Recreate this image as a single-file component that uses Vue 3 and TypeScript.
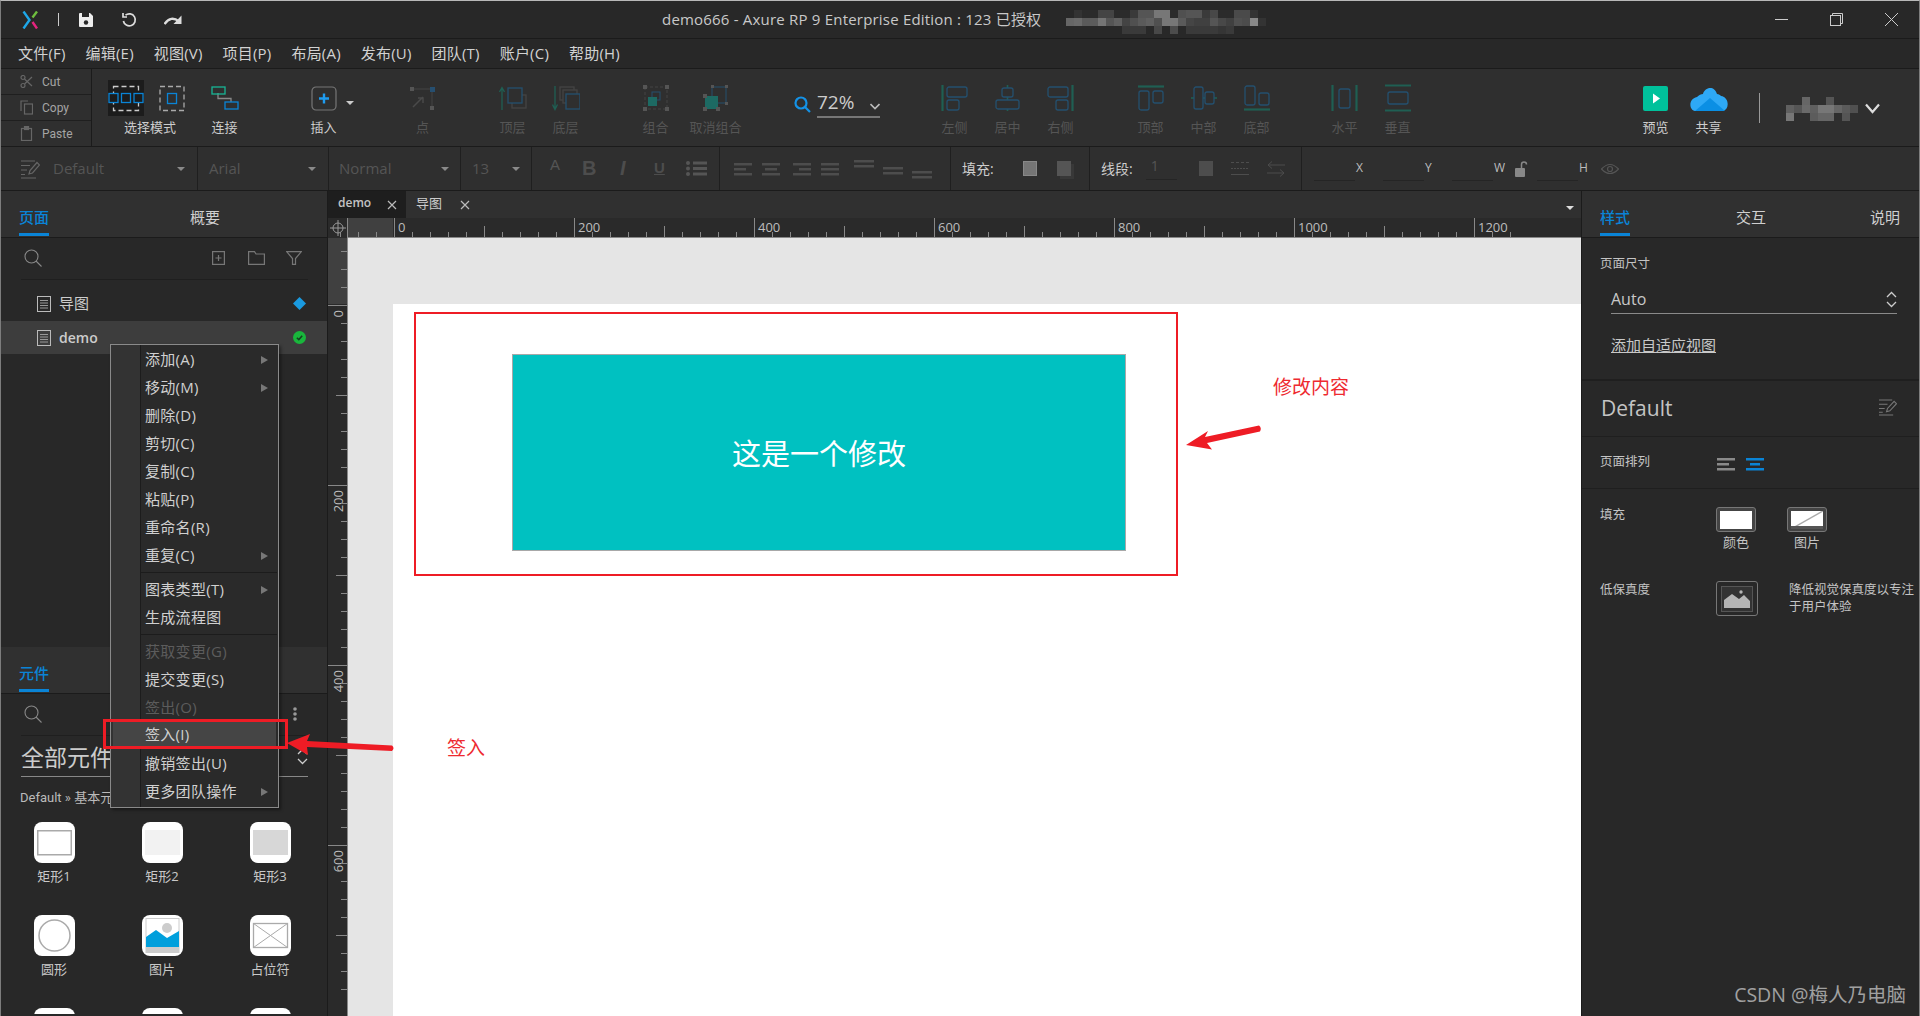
<script setup lang="ts">
const menus = ['文件(F)', '编辑(E)', '视图(V)', '项目(P)', '布局(A)', '发布(U)', '团队(T)', '账户(C)', '帮助(H)']

type MenuItem = { text: string; sub?: boolean; off?: boolean; hot?: boolean; sep?: boolean }

const contextMenu: MenuItem[] = [
  { text: '添加(A)', sub: true },
  { text: '移动(M)', sub: true },
  { text: '删除(D)' },
  { text: '剪切(C)' },
  { text: '复制(C)' },
  { text: '粘贴(P)' },
  { text: '重命名(R)' },
  { text: '重复(C)', sub: true },
  { text: '', sep: true },
  { text: '图表类型(T)', sub: true },
  { text: '生成流程图' },
  { text: '', sep: true },
  { text: '获取变更(G)', off: true },
  { text: '提交变更(S)' },
  { text: '签出(O)', off: true },
  { text: '签入(I)', hot: true },
  { text: '撤销签出(U)' },
  { text: '更多团队操作', sub: true }
]

// blurred-out areas of the screenshot, one grey per cell
const titleBlur = [
  '28 33 2b 2b 44 44 2b 2b 3a 55 55 77 77 2b 50 55 55 3a 48 2b 2b 4a 4a 33 28',
  '66 6a 5a 5c 75 55 60 44 50 5a 60 50 77 77 5a 45 40 40 55 48 40 50 4c 88 33',
  '28 28 28 28 28 28 28 3a 3a 3a 28 48 28 4c 28 3a 3a 3a 3a 35 3a 28 28 28 28'
].flatMap((r) => r.split(' '))

const userBlur = [
  '2f 2f 66 2f 2f 55 2f 2f 2f',
  '60 55 6a 60 77 77 66 5a 50',
  '77 2f 2f 5c 66 66 2f 55 2f'
].flatMap((r) => r.split(' '))

const topTicks = Array.from({ length: 66 }, (_, i) => {
  const k = i - 3
  return { x: 66 + 18 * k, h: k % 10 === 0 ? 19 : k % 5 === 0 ? 11 : 5, label: k >= 0 && k % 10 === 0 ? String(k * 20) : '' }
})

const leftTicks = Array.from({ length: 42 }, (_, i) => {
  const k = i - 3
  return { y: 67 + 18 * k, w: k % 10 === 0 ? 19 : k % 5 === 0 ? 11 : 6, label: k >= 0 && k % 10 === 0 ? String(k * 20) : '' }
})
</script>

<template>
  <div class="app">
    <header class="titlebar">
      <svg class="logo" width="16" height="18" viewBox="0 0 16 18" fill="none" stroke-width="2.4">
        <path d="M1.5 0.5 L7.5 9 L1.5 17.5" stroke="#1ea7e8" />
        <path d="M15 0.5 L10.5 6.5" stroke="#6fbf3f" />
        <path d="M10.5 11 L15 17.5" stroke="#e5247f" />
      </svg>
      <i class="title-sep"></i>
      <svg class="qa first" width="16" height="16" viewBox="0 0 16 16">
        <path d="M2 1 H12 L15 4 V14 Q15 15 14 15 H2 Q1 15 1 14 V2 Q1 1 2 1 Z" fill="#eee" />
        <rect x="4" y="1" width="7" height="4" fill="#282828" />
        <circle cx="8" cy="10.5" r="2.2" fill="#282828" />
      </svg>
      <svg class="qa" width="16" height="16" viewBox="0 0 16 16" fill="none" stroke="#ddd" stroke-width="1.7">
        <path d="M4.5 3.2 A6 6 0 1 1 2.4 9" />
        <path d="M2 1 V5 H6" />
      </svg>
      <svg class="qa" width="18" height="16" viewBox="0 0 18 16" fill="none" stroke="#ddd" stroke-width="2.4">
        <path d="M0.500 12 Q7 3 15 9.500" />
        <path d="M17.500 3.500 V12 H9.500 Z" fill="#ddd" stroke="none" />
      </svg>
      <div class="title">demo666 - Axure RP 9 Enterprise Edition : 123 已授权</div>
      <div class="blur title-blur">
        <i v-for="(g, i) in titleBlur" :key="i" :style="{ background: `#${g}${g}${g}` }"></i>
      </div>
      <div class="win">
        <svg width="13" height="13" viewBox="0 0 13 13" stroke="#ccc" fill="none"><path d="M0 6.500 H13" /></svg>
        <svg width="13" height="13" viewBox="0 0 13 13" stroke="#ccc" fill="none">
          <rect x="0.500" y="2.500" width="10" height="10" />
          <path d="M2.500 2.500 V0.500 H12.500 V10.500 H10.500" />
        </svg>
        <svg width="13" height="13" viewBox="0 0 13 13" stroke="#ccc" fill="none"><path d="M0 0 L13 13 M13 0 L0 13" /></svg>
      </div>
    </header>

    <nav class="menubar">
      <span v-for="m in menus" :key="m">{{ m }}</span>
    </nav>

    <section class="toolbar">
      <div class="clipboard">
        <div>
          <svg width="13" height="13" viewBox="0 0 13 13" fill="none" stroke="#666" stroke-width="1.200">
            <circle cx="3" cy="10.500" r="2" /><circle cx="3" cy="2.500" r="2" /><path d="M4.500 4 L12 11 M4.500 9 L12 2" />
          </svg>
          <span>Cut</span>
        </div>
        <div>
          <svg width="13" height="15" viewBox="0 0 13 15" fill="none" stroke="#666" stroke-width="1.200">
            <rect x="4.500" y="4" width="8" height="10" /><path d="M1 11 V1 H8" />
          </svg>
          <span>Copy</span>
        </div>
        <div>
          <svg width="13" height="15" viewBox="0 0 13 15" fill="none" stroke="#666" stroke-width="1.200">
            <rect x="1.500" y="2.500" width="10" height="12" /><rect x="4.500" y="0.500" width="4" height="3" fill="#666" />
          </svg>
          <span>Paste</span>
        </div>
      </div>

      <div class="tool sel">
        <div class="sel-icons">
          <svg class="sel-on" width="36" height="36" viewBox="0 0 36 36" fill="none">
            <rect x="5.500" y="6.500" width="25" height="24" stroke="#ccc" stroke-dasharray="5 3" stroke-width="1.300" />
            <g stroke="#0a84d6" stroke-width="1.300" fill="#1c1c1c">
              <rect x="1" y="13.500" width="9" height="9" /><rect x="13.500" y="13.500" width="9" height="9" /><rect x="26" y="13.500" width="9" height="9" />
            </g>
          </svg>
          <svg width="26" height="36" viewBox="0 0 26 36" fill="none">
            <rect x="1" y="6.500" width="24" height="24" stroke="#aaa" stroke-dasharray="5 3" stroke-width="1.300" />
            <rect x="8.500" y="13.500" width="9" height="10" stroke="#0a84d6" stroke-width="1.300" />
          </svg>
        </div>
        <span>选择模式</span>
      </div>

      <div class="tool">
        <div class="tool-icon">
          <svg width="28" height="24" viewBox="0 0 28 24" fill="none" stroke-width="1.300">
            <path d="M7 7 V12.500 H20 V16" stroke="#888" />
            <rect x="1" y="1" width="13" height="7" stroke="#18b596" />
            <rect x="14" y="16" width="13" height="7" stroke="#0a84d6" />
          </svg>
        </div>
        <span>连接</span>
      </div>

      <div class="tool insert">
        <div class="tool-icon">
          <svg width="26" height="25" viewBox="0 0 26 25" fill="none">
            <rect x="1" y="1" width="24" height="23" rx="4" stroke="#777" stroke-width="1.200" />
            <path d="M13 7.500 V17.500 M8 12.500 H18" stroke="#1e9cf0" stroke-width="2.400" />
          </svg>
          <i class="caret big"></i>
        </div>
        <span>插入</span>
      </div>

      <div class="tool off pt">
        <div class="tool-icon">
          <svg width="28" height="25" viewBox="0 0 28 25" fill="none">
            <path d="M4 3 H23 V21" stroke="#444" />
            <path d="M4 21 L14 11 M9 12 H14 V17" stroke="#4a4a4a" stroke-width="1.500" />
            <rect x="1" y="1" width="4" height="4" fill="#555" />
            <rect x="21" y="1" width="5" height="5" fill="#264f70" />
            <rect x="21" y="20" width="4" height="4" fill="#555" />
          </svg>
        </div>
        <span>点</span>
      </div>

      <div class="tool off gap37">
        <div class="tool-icon">
          <svg width="28" height="25" viewBox="0 0 28 25" fill="none" stroke-width="1.300">
            <path d="M3 24 V2 M0.500 6 L3 1.500 L5.500 6" stroke="#1f5f53" />
            <rect x="13" y="9" width="14" height="13" stroke="#444" />
            <rect x="9" y="2" width="14" height="15" stroke="#24506f" fill="#2f2f2f" />
          </svg>
        </div>
        <span>顶层</span>
      </div>
      <div class="tool off">
        <div class="tool-icon">
          <svg width="28" height="25" viewBox="0 0 28 25" fill="none" stroke-width="1.300">
            <path d="M3 0 V23 M0.500 18.500 L3 23.500 L5.500 18.500" stroke="#1f5f53" />
            <rect x="8" y="1" width="14" height="13" stroke="#444" />
            <rect x="11" y="4" width="14" height="13" stroke="#444" fill="#2f2f2f" />
            <rect x="14" y="8" width="14" height="15" stroke="#24506f" fill="#2f2f2f" />
          </svg>
        </div>
        <span>底层</span>
      </div>

      <div class="tool off gap37">
        <div class="tool-icon">
          <svg width="26" height="26" viewBox="0 0 26 26" fill="none">
            <rect x="2" y="2" width="22" height="22" stroke="#444" stroke-dasharray="3 2" />
            <rect x="9" y="7" width="8" height="8" stroke="#24506f" />
            <rect x="5" y="12" width="9" height="9" fill="#1d6a63" />
            <g fill="#555"><rect x="0" y="0" width="4" height="4" /><rect x="22" y="0" width="4" height="4" /><rect x="0" y="22" width="4" height="4" /><rect x="22" y="22" width="4" height="4" /></g>
          </svg>
        </div>
        <span>组合</span>
      </div>
      <div class="tool off gap7">
        <div class="tool-icon">
          <svg width="26" height="26" viewBox="0 0 26 26" fill="none">
            <rect x="9" y="2" width="14" height="16" stroke="#24506f" />
            <rect x="2" y="11" width="13" height="13" fill="#1d6a63" />
            <g fill="#555"><rect x="8" y="0" width="3" height="3" /><rect x="22" y="0" width="3" height="3" /><rect x="22" y="17" width="3" height="3" /><rect x="0" y="9" width="4" height="4" /><rect x="13" y="22" width="4" height="4" /><rect x="0" y="22" width="4" height="4" /></g>
          </svg>
        </div>
        <span>取消组合</span>
      </div>

      <div class="zoom">
        <svg width="17" height="17" viewBox="0 0 17 17" fill="none" stroke="#1492e6" stroke-width="2.200">
          <circle cx="7" cy="7" r="5.500" /><path d="M11 11 L16 16" />
        </svg>
        <div class="zoom-val">
          <span>72%</span>
          <svg width="10" height="7" viewBox="0 0 10 7" fill="none" stroke="#bbb" stroke-width="1.600"><path d="M0.500 1 L5 5.500 L9.500 1" /></svg>
        </div>
      </div>

      <div class="tool off gap48">
        <div class="tool-icon">
          <svg width="27" height="26" viewBox="0 0 27 26" fill="none" stroke="#24506f" stroke-width="1.300">
            <path d="M1.500 0 V26" stroke="#1f5f53" stroke-width="2.200" />
            <rect x="6" y="2" width="20" height="10" rx="2" /><rect x="6" y="15" width="12" height="10" rx="2" />
          </svg>
        </div>
        <span>左侧</span>
      </div>
      <div class="tool off">
        <div class="tool-icon">
          <svg width="27" height="26" viewBox="0 0 27 26" fill="none" stroke="#24506f" stroke-width="1.300">
            <path d="M13.500 0 V26" stroke="#1f5f53" stroke-width="1.600" />
            <rect x="8" y="3" width="11" height="9" rx="2" fill="#2f2f2f" /><rect x="2" y="15" width="23" height="9" rx="2" fill="#2f2f2f" />
          </svg>
        </div>
        <span>居中</span>
      </div>
      <div class="tool off">
        <div class="tool-icon">
          <svg width="27" height="26" viewBox="0 0 27 26" fill="none" stroke="#24506f" stroke-width="1.300">
            <path d="M25.500 0 V26" stroke="#1f5f53" stroke-width="2.200" />
            <rect x="1" y="2" width="20" height="10" rx="2" /><rect x="9" y="15" width="12" height="10" rx="2" />
          </svg>
        </div>
        <span>右侧</span>
      </div>

      <div class="tool off gap37">
        <div class="tool-icon">
          <svg width="26" height="26" viewBox="0 0 26 26" fill="none" stroke="#24506f" stroke-width="1.300">
            <path d="M0 1.500 H26" stroke="#1f5f53" stroke-width="2.200" />
            <rect x="1" y="6" width="10" height="19" rx="2" /><rect x="15" y="6" width="10" height="12" rx="2" />
          </svg>
        </div>
        <span>顶部</span>
      </div>
      <div class="tool off">
        <div class="tool-icon">
          <svg width="26" height="26" viewBox="0 0 26 26" fill="none" stroke="#24506f" stroke-width="1.300">
            <path d="M0 13 H26" stroke="#1f5f53" stroke-width="1.600" />
            <rect x="3" y="2" width="9" height="22" rx="2" fill="#2f2f2f" /><rect x="14" y="7" width="9" height="12" rx="2" fill="#2f2f2f" />
          </svg>
        </div>
        <span>中部</span>
      </div>
      <div class="tool off">
        <div class="tool-icon">
          <svg width="26" height="26" viewBox="0 0 26 26" fill="none" stroke="#24506f" stroke-width="1.300">
            <path d="M0 24.500 H26" stroke="#1f5f53" stroke-width="2.200" />
            <rect x="1" y="1" width="10" height="19" rx="2" /><rect x="15" y="8" width="10" height="12" rx="2" />
          </svg>
        </div>
        <span>底部</span>
      </div>

      <div class="tool off gap35">
        <div class="tool-icon">
          <svg width="27" height="26" viewBox="0 0 27 26" fill="none" stroke="#24506f" stroke-width="1.300">
            <path d="M1.500 0 V26 M25.500 0 V26" stroke="#1f5f53" stroke-width="2.200" />
            <rect x="8" y="4" width="11" height="19" rx="2" />
          </svg>
        </div>
        <span>水平</span>
      </div>
      <div class="tool off">
        <div class="tool-icon">
          <svg width="26" height="28" viewBox="0 0 26 28" fill="none" stroke="#24506f" stroke-width="1.300">
            <path d="M0 1.500 H26 M0 26.500 H26" stroke="#1f5f53" stroke-width="2.200" />
            <rect x="3" y="8" width="20" height="12" rx="2" />
          </svg>
        </div>
        <span>垂直</span>
      </div>

      <div class="tool preview">
        <div class="tool-icon">
          <svg width="25" height="25" viewBox="0 0 25 25">
            <rect width="25" height="25" rx="2" fill="#00c19b" />
            <path d="M10 7.500 L17 12.500 L10 17.500 Z" fill="#fff" />
          </svg>
        </div>
        <span>预览</span>
      </div>
      <div class="tool">
        <div class="tool-icon">
          <svg width="38" height="25" viewBox="0 0 38 25">
            <path d="M5 25 C-1 24 -2 13 7 11 C9 9 11 8 13 8 C14 2 24 -2 27 8 C29 8 30 9 31 10 C39 11 40 23 33 25 Z" fill="#2ea9f6" />
            <path d="M5 25 L20 12 L35 25 Z" fill="#0a8fe4" />
          </svg>
        </div>
        <span>共享</span>
      </div>
      <i class="tool-sep"></i>
      <div class="blur user-blur">
        <i v-for="(g, i) in userBlur" :key="i" :style="{ background: `#${g}${g}${g}` }"></i>
      </div>
      <svg class="user-chev" width="15" height="11" viewBox="0 0 15 11" fill="none" stroke="#ddd" stroke-width="2.200"><path d="M1 1.500 L7.500 9 L14 1.500" /></svg>
    </section>

    <section class="formatbar">
      <div class="fmt f1">
        <svg width="20" height="20" viewBox="0 0 20 20" fill="none" stroke="#666" stroke-width="1.200">
          <path d="M1 2 H15 M1 6.500 H10 M1 11 H7 M1 15.500 H5 M1 19 H16" />
          <path d="M9 15 L10 11.500 L17 3.500 L19.500 6 L12.500 14 Z" />
        </svg>
        <span class="style-name">Default</span><i class="caret"></i>
      </div>
      <div class="fmt f2"><span>Arial</span><i class="caret"></i></div>
      <div class="fmt f3"><span>Normal</span><i class="caret"></i></div>
      <div class="fmt f4"><span>13</span><i class="caret"></i></div>
      <div class="fmt f5">
        <span class="a">A</span><b>B</b><b class="it">I</b><span class="u">U</span>
        <svg width="22" height="15" viewBox="0 0 22 15" fill="#555">
          <circle cx="2" cy="2" r="2" /><circle cx="2" cy="7.500" r="2" /><circle cx="2" cy="13" r="2" />
          <rect x="7" y="0.500" width="14" height="3" /><rect x="7" y="6" width="14" height="3" /><rect x="7" y="11.500" width="14" height="3" />
        </svg>
      </div>
      <div class="fmt f6">
        <svg width="230" height="43" viewBox="0 0 230 43" fill="#4d4d4d">
          <g transform="translate(14 16)"><rect width="18" height="2.500" /><rect y="5" width="12" height="2.500" /><rect y="10" width="18" height="2.500" /></g>
          <g transform="translate(42 16)"><rect width="18" height="2.500" /><rect x="3" y="5" width="12" height="2.500" /><rect y="10" width="18" height="2.500" /></g>
          <g transform="translate(73 16)"><rect width="18" height="2.500" /><rect x="6" y="5" width="12" height="2.500" /><rect y="10" width="18" height="2.500" /></g>
          <g transform="translate(101 16)"><rect width="18" height="2.500" /><rect y="5" width="18" height="2.500" /><rect y="10" width="18" height="2.500" /></g>
          <g transform="translate(134 13)"><rect width="20" height="2.500" /><rect y="5" width="20" height="2.500" /></g>
          <g transform="translate(163 20)"><rect width="20" height="2.500" /><rect y="5" width="20" height="2.500" /></g>
          <g transform="translate(192 24)"><rect width="20" height="2.500" /><rect y="5" width="20" height="2.500" /></g>
        </svg>
      </div>
      <div class="fmt f7">
        <span class="fmt-label">填充:</span>
        <i class="swatch light"></i>
        <i class="swatch shadow"></i>
      </div>
      <div class="fmt f8">
        <span class="fmt-label">线段:</span>
        <span class="stroke-w">1</span>
        <i class="swatch dark"></i>
        <svg class="dash" width="18" height="15" viewBox="0 0 18 15" fill="none" stroke="#4d4d4d"><path d="M0 1.500 H18" stroke-dasharray="3 2" /><path d="M0 7.500 H18" stroke-dasharray="2 1" /><path d="M0 13.500 H18" /></svg>
        <svg class="ends" width="18" height="16" viewBox="0 0 18 16" fill="none" stroke="#4d4d4d"><path d="M18 4 H1 M5 0.500 L1 4 L5 7.500 M0 12 H17 M13 8.500 L17 12 L13 15.500" /></svg>
      </div>
      <div class="fmt f9">
        <i class="inp"></i><span>X</span>
        <i class="inp"></i><span>Y</span>
        <i class="inp"></i><span>W</span>
        <svg class="lock" width="13" height="16" viewBox="0 0 13 16" fill="none">
          <rect x="0" y="7" width="10" height="9" rx="1" fill="#888" />
          <path d="M6.500 7 V3.500 Q6.500 1 9 1 Q11.500 1 11.500 3.500" stroke="#888" stroke-width="1.500" />
        </svg>
        <i class="inp"></i><span>H</span>
        <svg class="eye" width="18" height="14" viewBox="0 0 18 14" fill="none" stroke="#555" stroke-width="1.200"><path d="M0.500 7 Q9 -2 17.500 7 Q9 16 0.500 7 Z" /><circle cx="9" cy="7" r="2.500" /></svg>
      </div>
    </section>

    <main class="workspace">
      <aside class="left">
        <div class="pages">
          <div class="tabs">
            <span class="tab on">页面</span>
            <span class="tab outline">概要</span>
          </div>
          <div class="searchrow">
            <svg width="18" height="18" viewBox="0 0 18 18" fill="none" stroke="#888" stroke-width="1.100"><circle cx="7.500" cy="7.500" r="6.500" /><path d="M12 12 L17.500 17.500" /></svg>
            <svg class="add" width="13" height="14" viewBox="0 0 13 14" fill="none" stroke="#777" stroke-width="1.200"><rect x="0.600" y="0.600" width="11.800" height="12.800" /><path d="M6.500 4 V10 M3.500 7 H9.500" /></svg>
            <svg class="folder" width="17" height="14" viewBox="0 0 17 14" fill="none" stroke="#777" stroke-width="1.200"><path d="M0.600 13.400 V0.600 H6.500 L8 3 H16.400 V13.400 Z" /></svg>
            <svg class="filter" width="16" height="14" viewBox="0 0 16 14" fill="none" stroke="#777" stroke-width="1.200"><path d="M0.600 0.600 H15.400 L9.500 7.500 V13.400 H6.500 V7.500 Z" /></svg>
          </div>
          <div class="pagelist">
            <div class="pagerow">
              <svg width="14" height="16" viewBox="0 0 14 16" fill="none" stroke="#bbb"><rect x="0.500" y="0.500" width="13" height="15" /><path d="M3 4.500 H11 M3 7 H11 M3 9.500 H11 M3 12 H11" stroke="#999" /></svg>
              <span class="cjk-name">导图</span>
              <svg class="mark" width="13" height="13" viewBox="0 0 13 13"><path d="M6.500 0 L13 6.500 L6.500 13 L0 6.500 Z" fill="#1a9ae0" /></svg>
            </div>
            <div class="pagerow cur">
              <svg width="14" height="16" viewBox="0 0 14 16" fill="none" stroke="#bbb"><rect x="0.500" y="0.500" width="13" height="15" /><path d="M3 4.500 H11 M3 7 H11 M3 9.500 H11 M3 12 H11" stroke="#999" /></svg>
              <span>demo</span>
              <svg class="mark" width="13" height="13" viewBox="0 0 13 13" fill="none"><circle cx="6.500" cy="6.500" r="6.500" fill="#19b63c" /><path d="M3.800 6.800 L5.800 8.600 L9.200 4.800" stroke="#14401f" stroke-width="1.500" /></svg>
            </div>
          </div>
        </div>

        <div class="palette">
          <div class="tabs">
            <span class="tab on">元件</span>
          </div>
          <div class="searchrow">
            <svg width="18" height="18" viewBox="0 0 18 18" fill="none" stroke="#888" stroke-width="1.100"><circle cx="7.500" cy="7.500" r="6.500" /><path d="M12 12 L17.500 17.500" /></svg>
            <svg class="dots" width="4" height="14" viewBox="0 0 4 14" fill="#999"><circle cx="2" cy="2" r="1.800" /><circle cx="2" cy="7" r="1.800" /><circle cx="2" cy="12" r="1.800" /></svg>
          </div>
          <div class="libsel">
            <span>全部元件</span>
            <svg width="11" height="17" viewBox="0 0 11 17" fill="none" stroke="#ccc" stroke-width="1.300"><path d="M1 6 L5.500 1.500 L10 6 M1 11 L5.500 15.500 L10 11" /></svg>
          </div>
          <div class="crumb">Default » 基本元件</div>
          <div class="tiles">
            <div class="tile">
              <svg width="41" height="41" viewBox="0 0 41 41"><rect width="41" height="41" rx="8" fill="#fff" /><rect x="3.750" y="8.750" width="33.500" height="24" fill="#fff" stroke="#aaa" stroke-width="1.500" /></svg>
              <span>矩形1</span>
            </div>
            <div class="tile">
              <svg width="41" height="41" viewBox="0 0 41 41"><rect width="41" height="41" rx="8" fill="#fff" /><rect x="3" y="8" width="35" height="25" fill="#f2f2f2" /></svg>
              <span>矩形2</span>
            </div>
            <div class="tile">
              <svg width="41" height="41" viewBox="0 0 41 41"><rect width="41" height="41" rx="8" fill="#fff" /><rect x="3" y="8" width="35" height="25" fill="#d7d7d7" /></svg>
              <span>矩形3</span>
            </div>
            <div class="tile">
              <svg width="41" height="41" viewBox="0 0 41 41"><rect width="41" height="41" rx="8" fill="#fff" /><circle cx="20.500" cy="20.500" r="15.500" fill="#fff" stroke="#aaa" stroke-width="1.500" /></svg>
              <span>圆形</span>
            </div>
            <div class="tile">
              <svg width="41" height="41" viewBox="0 0 41 41">
                <rect width="41" height="41" rx="8" fill="#fff" />
                <rect x="4" y="3.500" width="33" height="34" fill="#fff" stroke="#ccc" />
                <circle cx="25" cy="13" r="5" fill="#ccc" />
                <path d="M4 22 L14 15 L25 23 L37 16 V32 H4 Z" fill="#009fdc" />
                <rect x="4" y="32" width="33" height="5" fill="#ccc" />
              </svg>
              <span>图片</span>
            </div>
            <div class="tile">
              <svg width="41" height="41" viewBox="0 0 41 41" fill="none" stroke="#aaa">
                <rect width="41" height="41" rx="8" fill="#fff" stroke="none" />
                <rect x="3.500" y="8.500" width="34" height="24" stroke-width="1.300" />
                <path d="M3.500 8.500 L37.500 32.500 M37.500 8.500 L3.500 32.500" />
              </svg>
              <span>占位符</span>
            </div>
            <div class="tile"><svg width="41" height="41" viewBox="0 0 41 41"><rect width="41" height="41" rx="8" fill="#fff" /></svg></div>
            <div class="tile"><svg width="41" height="41" viewBox="0 0 41 41"><rect width="41" height="41" rx="8" fill="#fff" /></svg></div>
            <div class="tile"><svg width="41" height="41" viewBox="0 0 41 41"><rect width="41" height="41" rx="8" fill="#fff" /></svg></div>
          </div>
        </div>
      </aside>

      <div class="center">
        <div class="doctabs">
          <div class="doctab cur"><span>demo</span><svg width="10" height="10" viewBox="0 0 10 10" stroke="#bbb" stroke-width="1.200"><path d="M1 1 L9 9 M9 1 L1 9" /></svg></div>
          <div class="doctab"><span>导图</span><svg width="10" height="10" viewBox="0 0 10 10" stroke="#bbb" stroke-width="1.200"><path d="M1 1 L9 9 M9 1 L1 9" /></svg></div>
          <i class="caret tabs-caret"></i>
        </div>
        <svg class="ruler-top" width="1253" height="20" viewBox="0 0 1253 20">
          <rect width="1253" height="20" fill="#2a2a2a" />
          <rect x="20" width="45" height="19" fill="#404040" />
          <g fill="none" stroke="#999">
            <circle cx="10" cy="10" r="5" /><path d="M10 2 V18 M2 10 H18" />
          </g>
          <path d="M19.500 0 V20 M20 19.500 H1253" stroke="#888" />
          <g v-for="t in topTicks" :key="t.x">
            <path :d="`M${t.x + 0.5} ${19 - t.h} V19`" stroke="#888" />
            <text v-if="t.label" :x="t.x + 4" y="14" class="ruler-text">{{ t.label }}</text>
          </g>
        </svg>
        <div class="view">
          <svg class="ruler-left" width="20" height="778" viewBox="0 0 20 778">
            <rect width="20" height="778" fill="#2a2a2a" />
            <rect width="19" height="66" fill="#404040" />
            <path d="M19.500 0 V778" stroke="#888" />
            <g v-for="t in leftTicks" :key="t.y">
              <path :d="`M${19 - t.w} ${t.y + 0.5} H19`" stroke="#888" />
              <text v-if="t.label" x="15" :y="t.y + 5" text-anchor="end" :transform="`rotate(-90 15 ${t.y + 5})`" class="ruler-text">{{ t.label }}</text>
            </g>
          </svg>
          <div class="canvas">
            <div class="sheet">
              <div class="redbox"></div>
              <div class="teal">这是一个修改</div>
              <div class="note n1">修改内容</div>
              <div class="note n2">签入</div>
            </div>
          </div>
        </div>
      </div>

      <aside class="right">
        <div class="tabs rtabs">
          <span class="tab on">样式</span>
          <span class="tab outline">交互</span>
          <span class="tab notes">说明</span>
        </div>
        <div class="r-size">
          <div class="r-label">页面尺寸</div>
          <div class="auto">
            <span>Auto</span>
            <svg width="11" height="17" viewBox="0 0 11 17" fill="none" stroke="#ccc" stroke-width="1.300"><path d="M1 6 L5.500 1.500 L10 6 M1 11 L5.500 15.500 L10 11" /></svg>
          </div>
          <div class="adaptive">添加自适应视图</div>
        </div>
        <div class="r-style">
          <span>Default</span>
          <svg width="19" height="17" viewBox="0 0 20 18" fill="none" stroke="#777" stroke-width="1.200">
            <path d="M1 1 H15 M1 5.500 H10 M1 10 H7 M1 14 H5 M1 17 H16" />
            <path d="M9 13.500 L10 10 L17 2.500 L19.500 5 L12.500 12.500 Z" />
          </svg>
        </div>
        <div class="r-align">
          <div class="r-label">页面排列</div>
          <div class="align-icons">
            <svg width="18" height="13" viewBox="0 0 18 13" fill="#8a8a8a"><rect width="18" height="2.500" /><rect y="5" width="12" height="2.500" /><rect y="10" width="18" height="2.500" /></svg>
            <svg width="18" height="13" viewBox="0 0 18 13" fill="#0a84d6"><rect width="18" height="2.500" /><rect x="4" y="5" width="10" height="2.500" /><rect y="10" width="18" height="2.500" /></svg>
          </div>
        </div>
        <div class="r-fill">
          <div class="r-label">填充</div>
          <div class="fill-opts">
            <div class="fill-opt">
              <div class="fill-box"><i class="fill-white"></i></div>
              <span>颜色</span>
            </div>
            <div class="fill-opt">
              <div class="fill-box">
                <svg width="32" height="18" viewBox="0 0 32 18"><rect width="32" height="18" fill="#fff" /><path d="M0 18 L32 0" stroke="#aaa" stroke-width="1.500" /><rect y="15" width="32" height="3" fill="#555" /></svg>
              </div>
              <span>图片</span>
            </div>
          </div>
          <div class="r-label lofi">低保真度</div>
          <div class="lofi-row">
            <div class="lofi-box">
              <svg width="32" height="26" viewBox="0 0 32 26">
                <rect x="0.500" y="0.500" width="31" height="25" fill="#333" stroke="#555" />
                <path d="M3 22 V14 L11 8 L18 13 L23 9 L29 15 V22 Z" fill="#b5b5b5" />
                <circle cx="20" cy="6" r="1.700" fill="#b5b5b5" />
              </svg>
            </div>
            <div class="lofi-text">降低视觉保真度以专注于用户体验</div>
          </div>
        </div>
      </aside>
    </main>

    <div class="ctx">
      <template v-for="(it, i) in contextMenu" :key="i">
        <div v-if="it.sep" class="ctx-sep"></div>
        <div v-else class="ctx-item" :class="{ off: it.off, hot: it.hot }">
          <span>{{ it.text }}</span>
          <i v-if="it.sub" class="ctx-arrow"></i>
        </div>
      </template>
    </div>

    <div class="callout"></div>
    <svg class="arrows" width="1920" height="1016" viewBox="0 0 1920 1016">
      <g fill="#ee1c25">
        <path d="M1259 425.500 L1205 437 L1208 431 L1186 445 L1212 449.500 L1207 443 L1260 431.500 Q1262 428 1259 425.500 Z" />
        <path d="M392 745.500 L307 741 L310 734 L287 743 L308 755 L307 747 L392 751 Q395 748 392 745.500 Z" />
      </g>
    </svg>
    <div class="watermark">CSDN @梅人乃电脑</div>
  </div>
</template>

<style>
html,
body {
  margin: 0;
  background: #282828;
  overflow: hidden;
}
</style>

<style scoped>
.app {
  position: relative;
  box-sizing: border-box;
  width: 1920px;
  height: 1016px;
  overflow: hidden;
  display: flex;
  flex-direction: column;
  border: 1px solid #7d7d7d;
  border-top-color: #b8b8b8;
  border-bottom: 0;
  background: #282828;
  color: #ccc;
  font-family: "Open Sans", "Noto Sans CJK SC", sans-serif;
  font-size: 13px;
}

i {
  display: block;
  font-style: normal;
}

svg {
  display: block;
  flex: none;
}

/* title bar */
.titlebar {
  height: 37px;
  flex: none;
  display: flex;
  align-items: center;
  padding-left: 21px;
  border-bottom: 1px solid #1b1b1b;
}

.title-sep {
  width: 1px;
  height: 13px;
  margin-left: 20px;
  background: #ccc;
}

.qa {
  margin-left: 27px;
}

.qa.first {
  margin-left: 19px;
}

.title {
  width: 402px;
  margin-left: 480px;
  padding-bottom: 2px;
  font-size: 15px;
  letter-spacing: 0.2px;
  color: #c9c9c9;
  white-space: nowrap;
}

.blur {
  display: grid;
}

.title-blur {
  grid-template-columns: repeat(25, 8px);
  grid-auto-rows: 8px;
  margin-top: 5px;
  margin-left: 2px;
}

.win {
  margin-left: auto;
  padding-right: 21px;
  display: flex;
  gap: 42px;
}

/* menu */
.menubar {
  flex: none;
  display: flex;
  align-items: center;
  gap: 20px;
  padding: 0 0 3px 17px;
  box-sizing: border-box;
  height: 30px;
  font-size: 15px;
  letter-spacing: 0.2px;
  color: #d2d2d2;
  border-bottom: 1px solid #1b1b1b;
}

/* toolbar */
.toolbar {
  height: 77px;
  flex: none;
  display: flex;
  background: #2f2f2f;
  border-bottom: 1px solid #1b1b1b;
}

.clipboard {
  width: 90px;
  flex: none;
  display: flex;
  flex-direction: column;
  border-right: 1px solid #1b1b1b;
  margin-right: 10px;
  font-family: Roboto, sans-serif;
  font-size: 12px;
  color: #a5a5a5;
}

.clipboard > div {
  height: 25px;
  display: flex;
  align-items: center;
  gap: 9px;
  padding-left: 19px;
  border-bottom: 1px solid #1f1f1f;
}

.clipboard > div:last-child {
  border-bottom: 0;
}

.tool {
  width: 53px;
  flex: none;
  padding-top: 11px;
  display: flex;
  flex-direction: column;
  align-items: center;
  color: #cdcdcd;
}

.tool > span {
  margin-top: 2px;
  line-height: 18px;
  white-space: nowrap;
}

.tool.off > span {
  color: #555;
}

.tool-icon {
  position: relative;
  height: 36px;
  display: flex;
  align-items: center;
  justify-content: center;
}

.sel {
  width: 96px;
}

.sel-icons {
  height: 36px;
  width: 96px;
  display: flex;
  gap: 15px;
  padding-left: 6px;
  box-sizing: border-box;
}

.sel-on {
  background: #1c1c1c;
}

.insert {
  margin-left: 46px;
}

.pt {
  margin-left: 46px;
}

.gap37 {
  margin-left: 37px;
}

.gap7 {
  margin-left: 7px;
}

.gap48 {
  margin-left: 48px;
}

.gap35 {
  margin-left: 35px;
}

.preview {
  margin-left: 205px;
}

.caret {
  width: 0;
  height: 0;
  border-left: 4px solid transparent;
  border-right: 4px solid transparent;
  border-top: 4px solid #8a8a8a;
}

.caret.big {
  position: absolute;
  left: 35px;
  top: 21px;
  border-top-color: #ccc;
}

.zoom {
  width: 86px;
  flex: none;
  margin-left: 52px;
  padding-top: 23px;
  display: flex;
  gap: 6px;
  height: 24px;
  align-items: flex-start;
}

.zoom > svg {
  margin-top: 4px;
}

.zoom-val {
  flex: 1;
  height: 24px;
  display: flex;
  align-items: flex-start;
  justify-content: space-between;
  border-bottom: 2px solid #777;
  font-size: 19px;
  line-height: 20px;
  color: #ccc;
}

.zoom-val svg {
  margin-top: 11px;
}

.tool-sep {
  width: 1px;
  height: 30px;
  margin: 24px 0 0 24px;
  background: #999;
}

.user-blur {
  grid-template-columns: repeat(9, 8px);
  grid-auto-rows: 8px;
  margin: 28px 0 0 26px;
  height: 24px;
}

.user-chev {
  margin: 34px 0 0 7px;
}

/* format bar */
.formatbar {
  height: 43px;
  flex: none;
  display: flex;
  background: #2f2f2f;
  border-bottom: 1px solid #1b1b1b;
  color: #555;
  font-size: 15px;
}

.fmt {
  box-sizing: border-box;
  flex: none;
  display: flex;
  align-items: center;
  border-right: 1px solid #1f1f1f;
}

.fmt > .caret {
  margin-left: auto;
}

.fmt > span {
  margin-bottom: 2px;
}

.f1 {
  width: 197px;
  padding: 0 12px 0 19px;
}

.style-name {
  margin-left: 13px;
}

.f2 {
  width: 131px;
  padding: 0 12px 0 11px;
}

.f3 {
  width: 132px;
  padding: 0 11px 0 10px;
}

.f4 {
  width: 71px;
  padding: 0 11px;
}

.f5 {
  width: 188px;
  padding-left: 18px;
  font-family: "Liberation Sans", sans-serif;
}

.f5 .a {
  width: 32px;
  font-size: 15px;
  margin-top: -6px;
}

.f5 b {
  width: 38px;
  font-size: 20px;
  font-weight: 700;
  color: #4d4d4d;
}

.f5 .it {
  width: 34px;
  font-style: italic;
}

.f5 .u {
  width: 32px;
  font-size: 15px;
  font-weight: 700;
  text-decoration: underline;
  color: #4d4d4d;
}

.f6 {
  width: 231px;
}

.f7 {
  width: 139px;
  padding-left: 11px;
}

.fmt-label {
  font-size: 14px;
  color: #cdcdcd;
  white-space: nowrap;
}

.swatch {
  width: 14px;
  height: 15px;
}

.swatch.light {
  margin-left: 29px;
  background: #757575;
  border: 1px solid #888;
  box-sizing: border-box;
}

.swatch.shadow {
  margin-left: 20px;
  background: #555;
  box-shadow: 3px 3px 0 #383838;
}

.f8 {
  width: 212px;
  padding-left: 11px;
}

.stroke-w {
  width: 31px;
  margin-left: 13px;
  padding: 0 0 2px 5px;
  box-sizing: border-box;
  font-size: 14px;
  line-height: 22px;
  border-bottom: 1px solid #252525;
}

.swatch.dark {
  margin-left: 22px;
  background: #4d4d4d;
}

.dash {
  margin-left: 18px;
}

.ends {
  margin-left: 18px;
}

.f9 {
  flex: 1;
  border-right: 0;
  padding-left: 12px;
  font-size: 12px;
  color: #bdbdbd;
}

.inp {
  width: 41px;
  height: 24px;
  border-bottom: 1px solid #252525;
  box-sizing: border-box;
}

.f9 span {
  width: 28px;
  padding-left: 1px;
  box-sizing: border-box;
}

.lock {
  margin-left: -6px;
  margin-right: 9px;
}

.eye {
  margin-left: -5px;
}

/* work area */
.workspace {
  flex: 1;
  min-height: 0;
  display: flex;
}

.left {
  width: 327px;
  flex: none;
  box-sizing: border-box;
  display: flex;
  flex-direction: column;
  border-right: 1px solid #1b1b1b;
}

.tabs {
  height: 46px;
  flex: none;
  display: flex;
  padding-left: 18px;
  background: #303030;
  border-bottom: 1px solid #1b1b1b;
}

.tab {
  height: 45px;
  box-sizing: border-box;
  padding-top: 15px;
  line-height: 22px;
  font-size: 15px;
  color: #cfcfcf;
}

.tab.on {
  color: #0a84d6;
  font-weight: 500;
  border-bottom: 3px solid #0a84d6;
}

.tab.outline {
  margin-left: 141px;
}

.rtabs .tab.outline {
  margin-left: 106px;
}

.tab.notes {
  margin-left: 104px;
}

.pages {
  height: 456px;
  flex: none;
}

.searchrow {
  height: 39px;
  margin: 0 19px 0 20px;
  display: flex;
  align-items: center;
  padding: 0 0 2px 3px;
  border-bottom: 1px solid #1f1f1f;
}

.add {
  margin-left: auto;
}

.folder {
  margin-left: 23px;
}

.filter {
  margin-left: 21px;
  margin-right: 6px;
}

.dots {
  margin-left: auto;
  margin-right: 11px;
}

.pagelist {
  padding-top: 7px;
  display: flex;
  flex-direction: column;
  gap: 1px;
  font-size: 14px;
}

.pagerow {
  height: 33px;
  display: flex;
  align-items: center;
  gap: 8px;
  padding: 0 21px 0 36px;
}

.pagerow.cur {
  background: #3d3d3d;
  font-weight: 600;
}

.cjk-name {
  font-size: 15px;
  padding-bottom: 3px;
}

.mark {
  margin-left: auto;
}

.palette {
  height: 367px;
  overflow: hidden;
}

.libsel {
  height: 40px;
  margin: 0 19px 0 20px;
  display: flex;
  align-items: center;
  justify-content: space-between;
  border-bottom: 1px solid #888;
  font-size: 23px;
  color: #ccc;
}

.crumb {
  margin: 11px 0 0 19px;
  height: 20px;
  line-height: 20px;
  font-family: Roboto, "Noto Sans CJK SC", sans-serif;
  font-size: 13px;
  color: #bbb;
  white-space: nowrap;
}

.tiles {
  display: grid;
  grid-template-columns: repeat(3, 108px);
  grid-auto-rows: 93px;
  margin: 14px 0 0 -1px;
}

.tile {
  display: flex;
  flex-direction: column;
  align-items: center;
  font-size: 13px;
  color: #c8c8c8;
}

.tile span {
  margin-top: 4px;
  line-height: 18px;
}

/* centre */
.center {
  flex: 1;
  min-width: 0;
  display: flex;
  flex-direction: column;
}

.doctabs {
  height: 27px;
  flex: none;
  display: flex;
  background: #303030;
  position: relative;
}

.doctab {
  width: 78px;
  display: flex;
  align-items: center;
  justify-content: space-between;
  padding: 0 9px 0 10px;
  box-sizing: border-box;
  font-size: 13px;
}

.doctab span {
  padding-bottom: 4px;
}

.doctab.cur {
  background: #1e1e1e;
  font-size: 12px;
  font-weight: 600;
  color: #c4c4c4;
}

.doctab:not(.cur) {
  width: 74px;
  padding-left: 10px;
  padding-right: 10px;
}

.tabs-caret {
  position: absolute;
  right: 7px;
  top: 15px;
  border-top-color: #ddd;
}

.ruler-top {
  flex: none;
}

.ruler-text {
  font-family: "Open Sans", sans-serif;
  font-size: 13px;
  fill: #bdbdbd;
}

.view {
  flex: 1;
  min-height: 0;
  display: flex;
}

.ruler-left {
  flex: none;
}

.canvas {
  flex: 1;
  min-width: 0;
  background: #e5e5e5;
  padding: 66px 0 0 45px;
  overflow: hidden;
}

.sheet {
  position: relative;
  height: 100%;
  background: #fff;
}

.redbox {
  position: absolute;
  left: 21px;
  top: 8px;
  width: 764px;
  height: 264px;
  box-sizing: border-box;
  border: 2px solid #ee1c25;
}

.teal {
  position: absolute;
  left: 119px;
  top: 50px;
  width: 614px;
  height: 197px;
  box-sizing: border-box;
  border: 1px solid #a8a8a8;
  padding-bottom: 2px;
  background: #00c1c1;
  color: #fff;
  font-size: 29px;
  display: flex;
  align-items: center;
  justify-content: center;
}

.note {
  position: absolute;
  font-size: 19px;
  line-height: 28px;
  color: #ee2a30;
}

.n1 {
  left: 880px;
  top: 69px;
}

.n2 {
  left: 54px;
  top: 430px;
}

/* right panel */
.right {
  width: 338px;
  flex: none;
  box-sizing: border-box;
  border-left: 1px solid #1b1b1b;
  display: flex;
  flex-direction: column;
}

.r-label {
  font-size: 12.5px;
  line-height: 18px;
  color: #c4c4c4;
}

.r-size {
  height: 143px;
  flex: none;
  box-sizing: border-box;
  padding: 17px 22px 0 18px;
  border-bottom: 2px solid #1f1f1f;
}

.auto {
  margin: 12px 0 0 11px;
  height: 28px;
  display: flex;
  align-items: center;
  justify-content: space-between;
  border-bottom: 1px solid #8a8a8a;
  font-size: 16px;
  color: #c8c8c8;
}

.adaptive {
  margin: 20px 0 0 11px;
  font-size: 15px;
  line-height: 22px;
  color: #c8c8c8;
  text-decoration: underline;
}

.r-style {
  height: 56px;
  flex: none;
  box-sizing: border-box;
  padding: 0 22px 2px 19px;
  display: flex;
  align-items: center;
  justify-content: space-between;
  font-size: 21px;
  color: #c4c4c4;
  border-bottom: 1px solid #1f1f1f;
}

.r-align {
  height: 52px;
  flex: none;
  box-sizing: border-box;
  padding: 16px 0 0 18px;
  display: flex;
  border-bottom: 1px solid #1f1f1f;
}

.align-icons {
  display: flex;
  gap: 11px;
  margin: 5px 0 0 67px;
}

.r-fill {
  padding: 17px 0 0 18px;
  display: grid;
  grid-template-columns: 116px 1fr;
}

.fill-opts {
  display: flex;
  gap: 31px;
  height: 74px;
  margin-top: 1px;
}

.fill-opt {
  width: 40px;
  display: flex;
  flex-direction: column;
  align-items: center;
  font-size: 13px;
  color: #c4c4c4;
}

.fill-opt span {
  margin-top: 1px;
  line-height: 18px;
}

.fill-box {
  width: 40px;
  height: 25px;
  box-sizing: border-box;
  border: 1px solid #777;
  border-radius: 3px;
  background: #444;
  display: flex;
  align-items: center;
  justify-content: center;
}

.fill-white {
  width: 32px;
  height: 18px;
  background: #fff;
}

.lofi-row {
  display: flex;
}

.lofi-box {
  width: 42px;
  height: 35px;
  box-sizing: border-box;
  border: 1px solid #777;
  border-radius: 3px;
  display: flex;
  align-items: center;
  justify-content: center;
  flex: none;
}

.lofi-text {
  width: 126px;
  margin-left: 31px;
  font-size: 12.5px;
  line-height: 17px;
  color: #c4c4c4;
}

/* context menu, over the panels */
.ctx {
  position: absolute;
  left: 109px;
  top: 343px;
  width: 169px;
  box-sizing: border-box;
  padding: 1px 0;
  border: 1px solid #8a8a8a;
  background: linear-gradient(90deg, #333 0, #333 29px, #1c1c1c 29px, #1c1c1c 30px, #2a2a2a 30px);
  box-shadow: 2px 2px 3px rgba(0, 0, 0, 0.4);
  font-size: 15px;
  letter-spacing: 0.3px;
  color: #d0d0d0;
  z-index: 2;
}

.ctx-item {
  height: 28px;
  padding-left: 34px;
  display: flex;
  align-items: center;
  white-space: nowrap;
}

.ctx-item span {
  padding-bottom: 3px;
  line-height: 24px;
}

.ctx-item.off {
  color: #5c5c5c;
}

.ctx-item.hot {
  height: 26px;
  margin: 0 2px 2px;
  padding-left: 32px;
  background: #454545;
}

.ctx-sep {
  height: 6px;
  box-sizing: border-box;
  margin-left: 30px;
  margin-right: 1px;
  background: linear-gradient(#1c1c1c, #1c1c1c) 0 2px / 100% 1px no-repeat;
}

.ctx-arrow {
  margin-left: auto;
  margin-right: 10px;
  width: 0;
  height: 0;
  border-top: 4px solid transparent;
  border-bottom: 4px solid transparent;
  border-left: 7px solid #777;
}

.callout {
  position: absolute;
  left: 102px;
  top: 718px;
  width: 185px;
  height: 30px;
  box-sizing: border-box;
  border: 3px solid #ee1c25;
  z-index: 3;
}

.arrows {
  position: absolute;
  left: -1px;
  top: -1px;
  z-index: 3;
  pointer-events: none;
}

.watermark {
  position: absolute;
  right: 13px;
  top: 982px;
  font-size: 19.5px;
  line-height: 24px;
  color: #a0a0a0;
}
</style>
